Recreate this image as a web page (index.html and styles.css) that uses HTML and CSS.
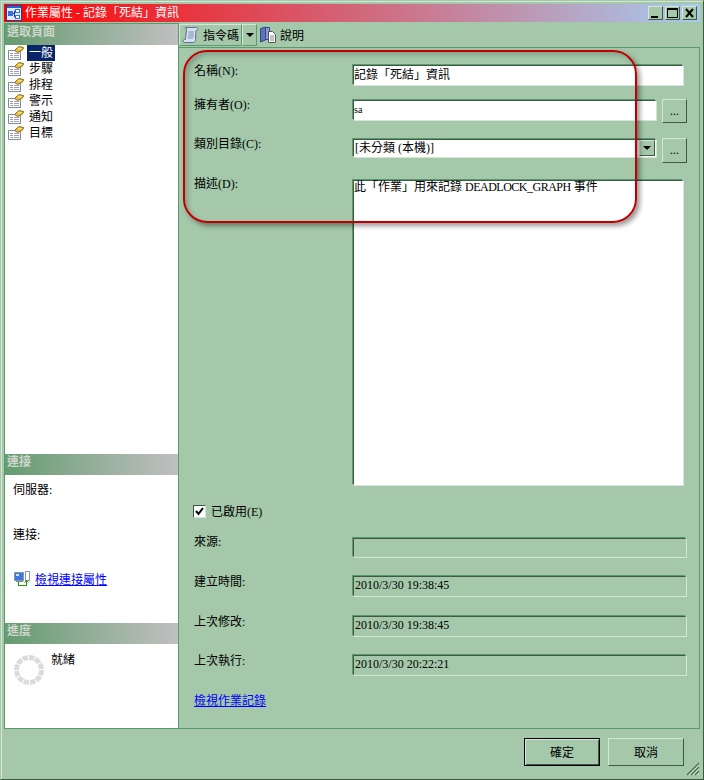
FILE: index.html
```html
<!DOCTYPE html>
<html lang="zh-Hant">
<head>
    <meta charset="UTF-8">
    <title>作業屬性</title>
    <link rel="stylesheet" href="styles.css">
</head>
<body>
    <svg class="defs" width="0" height="0">
        <symbol id="page-icon" viewBox="0 0 16 16">
            <path d="M.5 5.500h12v9H.5z" fill="#fff" stroke="#7f8a96"/>
            <path d="M2 8h3v1H2zM6 8h5v1H6zM2 10h3v1H2zM6 10h5v1H6zM2 12h3v1H2zM6 12h5v1H6z" fill="#9aa5b1"/>
            <path d="M6.500 5.500L11 1.500l4.500 1-.5 2-5 3z" fill="#f2c230" stroke="#5f5314" stroke-width=".8"/>
            <path d="M10 3.500l3.500.5" stroke="#fff2a8"/>
        </symbol>
    </svg>

    <div class="window">
        <header class="titlebar">
            <svg class="app-icon" width="16" height="16" viewBox="0 0 16 16">
                <rect x=".5" y=".5" width="15" height="15" fill="#dfe8f6" stroke="#23408f"/>
                <rect x="1" y="1" width="14" height="2" fill="#2f5fd0"/>
                <rect x="2" y="6" width="5" height="5" fill="#3a6fe0"/>
                <rect x="9.500" y="4.500" width="4" height="3" fill="#fff" stroke="#3a6fe0"/>
                <rect x="9.500" y="10.500" width="4" height="3" fill="#fff" stroke="#3a6fe0"/>
                <path d="M7 8.500h1.500M8.500 6v6M8.500 6h1M8.500 12h1" stroke="#23408f" fill="none"/>
            </svg>
            <span class="title-text">作業屬性 - 記錄「死結」資訊</span>
            <div class="window-buttons">
                <button class="win-btn"><svg width="13" height="12"><path d="M2 9h7v2H2z" fill="#000"/></svg></button>
                <button class="win-btn"><svg width="13" height="12"><path d="M1.500 2.500h10v8h-10z" fill="none" stroke="#000"/><path d="M1 1h11v2H1z" fill="#000"/></svg></button>
                <button class="win-btn win-close"><svg width="13" height="12"><path d="M3 2l7 8M10 2l-7 8" stroke="#000" stroke-width="2"/></svg></button>
            </div>
        </header>

        <div class="main">
            <aside class="sidebar">
                <div class="side-head">選取頁面</div>
                <ul class="page-list">
                    <li><svg width="16" height="16"><use href="#page-icon"/></svg><span class="selected">一般</span></li>
                    <li><svg width="16" height="16"><use href="#page-icon"/></svg><span>步驟</span></li>
                    <li><svg width="16" height="16"><use href="#page-icon"/></svg><span>排程</span></li>
                    <li><svg width="16" height="16"><use href="#page-icon"/></svg><span>警示</span></li>
                    <li><svg width="16" height="16"><use href="#page-icon"/></svg><span>通知</span></li>
                    <li><svg width="16" height="16"><use href="#page-icon"/></svg><span>目標</span></li>
                </ul>
                <div class="side-head">連接</div>
                <div class="conn-body">
                    <div class="conn-line">伺服器:</div>
                    <div class="conn-line">連接:</div>
                    <div class="conn-link">
                        <svg width="16" height="16" viewBox="0 0 16 16">
                            <rect x=".5" y="1.500" width="9" height="8" fill="#3b78e0" stroke="#8a97a8"/>
                            <rect x="2" y="3" width="3" height="2" fill="#cfe0ff"/>
                            <rect x="11.500" y=".5" width="4" height="9" fill="#fff" stroke="#8a97a8"/>
                            <rect x="2" y="10" width="7" height="1" fill="#7f8a96"/>
                            <path d="M4.500 11v3.500h8V10" fill="none" stroke="#2e9a10" stroke-width="1.200"/>
                            <path d="M10.500 11.500l2-2 2 2" fill="none" stroke="#2e9a10"/>
                        </svg>
                        <a href="#">檢視連接屬性</a>
                    </div>
                </div>
                <div class="side-head">進度</div>
                <div class="progress-body">
                    <svg width="30" height="30" viewBox="0 0 30 30">
                        <circle cx="15" cy="15" r="12.500" fill="none" stroke="#dcdcdc" stroke-width="5" stroke-dasharray="5.500 1"/>
                    </svg>
                    <span>就緒</span>
                </div>
            </aside>

            <section class="content">
                <div class="toolbar">
                    <button class="tool-btn script-btn">
                        <svg width="18" height="18" viewBox="0 0 18 18">
                            <path d="M3 1.500h11.500c1.800 0 2 3 0 3H14l-.5 9c0 2-1 3-2 3H2.500c-1.800 0-2-3 0-3h1L4.500 4C4.500 2.800 4 1.500 3 1.500z" fill="#d6dff2" stroke="#5f7290"/>
                            <path d="M6.500 6h5.500M6.500 8h5.500M6 10h6M6 12h5" stroke="#7f90aa"/>
                        </svg>
                        指令碼
                    </button>
                    <button class="tool-arrow"><span class="caret"></span></button>
                    <button class="tool-flat">
                        <svg width="18" height="18" viewBox="0 0 18 18">
                            <path d="M1.500 2.500l5-1.500v13l-5 2z" fill="#5f74b8" stroke="#34458a"/>
                            <path d="M6.500 1.500h4v12h-4z" fill="#8a9bd4" stroke="#34458a"/>
                            <path d="M9.500 5.500h4l3 3v8h-7z" fill="#fff" stroke="#555"/>
                            <path d="M11 10h4M11 12h4M11 14h4" stroke="#8a8a8a"/>
                        </svg>
                        說明
                    </button>
                </div>

                <form class="job-form">
                    <div class="row row-name">
                        <label class="row-label">名稱(N):</label>
                        <div class="field field-white field-name">記錄「死結」資訊</div>
                    </div>
                    <div class="row row-owner">
                        <label class="row-label">擁有者(O):</label>
                        <div class="field field-white field-short owner-value">sa</div>
                        <button type="button" class="dots">...</button>
                    </div>
                    <div class="row row-cat">
                        <label class="row-label">類別目錄(C):</label>
                        <div class="field field-white field-short field-combo">
                            <span>[未分類 (本機)]</span>
                            <span class="combo-arrow"><span class="caret"></span></span>
                        </div>
                        <button type="button" class="dots dots-tall">...</button>
                    </div>
                    <div class="row row-desc">
                        <label class="row-label">描述(D):</label>
                        <div class="field field-white field-desc"><span>此「作業」用來記錄 <span class="latin">DEADLOCK_GRAPH</span> 事件</span></div>
                    </div>
                    <div class="check-row">
                        <span class="check">
                            <svg width="11" height="11"><path d="M2 5l2.500 3L9 2" fill="none" stroke="#000" stroke-width="2"/></svg>
                        </span>
                        已啟用(E)
                    </div>
                    <div class="row row-source">
                        <label class="row-label">來源:</label>
                        <div class="field field-info field-source"></div>
                    </div>
                    <div class="row row-created">
                        <label class="row-label">建立時間:</label>
                        <div class="field field-info">2010/3/30 19:38:45</div>
                    </div>
                    <div class="row row-modified">
                        <label class="row-label">上次修改:</label>
                        <div class="field field-info">2010/3/30 19:38:45</div>
                    </div>
                    <div class="row row-run">
                        <label class="row-label">上次執行:</label>
                        <div class="field field-info">2010/3/30 20:22:21</div>
                    </div>
                    <a class="history-link" href="#">檢視作業記錄</a>
                </form>

                <div class="annotation"></div>
            </section>
        </div>

        <footer class="footer">
            <button class="dlg-btn dlg-default">確定</button>
            <button class="dlg-btn">取消</button>
            <svg class="grip" width="14" height="14" viewBox="0 0 14 14">
                <path d="M1 13L13 1M5 13l8-8M9 13l4-4" stroke="#4a6a50" stroke-width="1.200"/>
                <path d="M3 13L13 3M7 13l6-6M11 13l2-2" stroke="#d5e6d7"/>
            </svg>
        </footer>
    </div>
</body>
</html>
```

FILE: styles.css
```css
* {
    box-sizing: border-box;
}
body {
    margin: 0;
    font-family: "Liberation Serif", "Noto Sans CJK TC", serif;
    font-size: 12px;
    color: #000;
}
.defs {
    position: absolute;
}
button {
    font: inherit;
    color: inherit;
    padding: 0;
}
.window {
    width: 704px;
    height: 780px;
    display: flex;
    flex-direction: column;
    padding: 3px;
    background: #a4c8a9;
    border: 1px solid #a4c8a9;
    border-right-color: #3f5a44;
    border-bottom-color: #3f5a44;
    box-shadow: inset 1px 1px 0 #d5e6d7;
}

/* title bar */
.titlebar {
    height: 18px;
    display: flex;
    align-items: center;
    padding: 0 3px 0 2px;
    background: linear-gradient(to right, #ff0000, #a6caf0);
    color: #fff;
    flex: none;
}
.app-icon {
    margin-right: 3px;
}
.title-text {
    line-height: 18px;
}
.window-buttons {
    margin-left: auto;
    display: flex;
    gap: 2px;
}
.win-btn {
    width: 15px;
    height: 14px;
    display: flex;
    align-items: center;
    justify-content: center;
    background: #a4c8a9;
    border: 1px solid;
    border-color: #d5e6d7 #3f5a44 #3f5a44 #d5e6d7;
}

.main {
    flex: 1;
    display: flex;
    min-height: 0;
    margin-top: 1px;
}

/* left panel */
.sidebar {
    width: 175px;
    flex: none;
    display: flex;
    flex-direction: column;
    background: #fff;
    border: 1px solid #5b9a6b;
}
.side-head {
    height: 21px;
    flex: none;
    padding-left: 2px;
    line-height: 16px;
    font-weight: bold;
    color: #cfd6cc;
    background: linear-gradient(to right, #659c70, #c0c0c0);
}
.page-list {
    flex: 1;
    margin: 0;
    padding: 0 0 0 3px;
    list-style: none;
}
.page-list li {
    height: 16px;
    display: flex;
    align-items: center;
}
.page-list span {
    margin-left: 3px;
    padding: 0 2px;
    height: 16px;
    line-height: 17px;
}
.page-list .selected {
    background: #0a246a;
    color: #fff;
}
.conn-body {
    height: 148px;
    flex: none;
    padding: 7px 0 0 8px;
}
.conn-line {
    height: 45px;
    line-height: 16px;
}
.conn-link {
    display: flex;
    align-items: center;
    gap: 5px;
    margin-top: -2px;
    margin-left: 1px;
}
a {
    color: #0000ff;
}
.progress-body {
    height: 84px;
    flex: none;
    display: flex;
    align-items: flex-start;
    padding: 10px 0 0 9px;
}
.progress-body svg {
    margin-top: 1px;
}
.progress-body span {
    margin: -2px 0 0 7px;
    line-height: 16px;
}

/* right panel */
.content {
    position: relative;
    flex: 1;
    display: flex;
    flex-direction: column;
}
.toolbar {
    height: 24px;
    flex: none;
    display: flex;
    align-items: center;
}
.tool-btn,
.tool-arrow {
    height: 22px;
    display: flex;
    align-items: center;
    background: #a4c8a9;
    border: 1px solid;
    border-color: #d5e6d7 #5b9a6b #5b9a6b #d5e6d7;
}
.tool-btn {
    width: 63px;
    padding-left: 2px;
    gap: 3px;
}
.tool-arrow {
    width: 15px;
    justify-content: center;
}
.tool-flat {
    display: flex;
    align-items: center;
    gap: 3px;
    margin-left: 2px;
    background: none;
    border: none;
}
.caret {
    width: 0;
    height: 0;
    border-left: 4px solid transparent;
    border-right: 4px solid transparent;
    border-top: 4px solid #000;
}
.job-form {
    flex: 1;
    display: flex;
    flex-direction: column;
    padding: 16px 0 0 15px;
    border: 1px solid #5b9a6b;
    border-left: none;
}
.row {
    display: flex;
    align-items: flex-start;
    flex: none;
}
.row-label {
    width: 159px;
    flex: none;
    margin-top: -1px;
    line-height: 14px;
}
.field {
    display: flex;
    align-items: center;
    padding-left: 0;
    line-height: 14px;
    border: 1px solid;
    box-shadow: -1px -1px 0 #5b9a6b, 1px 1px 0 #d5e6d7;
}
.field-white {
    background: #fff;
    border-color: #3f5a44 #fff #fff #3f5a44;
}
.field-name {
    width: 330px;
    height: 20px;
    padding-bottom: 1px;
}
.field-short {
    width: 303px;
    height: 20px;
    margin-top: 1px;
}
.owner-value {
    font-size: 10px;
}
.field-desc {
    width: 330px;
    height: 305px;
    align-items: flex-start;
    line-height: 13px;
}
.latin {
    letter-spacing: -0.5px;
}
.field-info {
    width: 333px;
    height: 20px;
    padding-left: 1px;
    padding-bottom: 2px;
    border-color: #3f5a44 #a4c8a9 #a4c8a9 #3f5a44;
}
.field-source {
    height: 19px;
}
.dots {
    width: 25px;
    height: 24px;
    margin-left: 6px;
    background: #a4c8a9;
    border: 1px solid;
    border-color: #d5e6d7 #3f5a44 #3f5a44 #d5e6d7;
}
.dots-tall {
    height: 25px;
}
.row-name {
    margin-top: 1px;
}
.row-owner {
    margin-top: 14px;
}
.row-cat {
    margin-top: 15px;
}
.row-desc {
    margin-top: 17px;
}
.row-desc .row-label {
    margin-top: -3px;
}
.field-combo {
    height: 18px;
    justify-content: space-between;
    padding-left: 1px;
    padding-right: 0;
}
.combo-arrow {
    width: 16px;
    height: 16px;
    display: flex;
    align-items: center;
    justify-content: center;
    background: #a4c8a9;
    border: 1px solid;
    border-color: #d5e6d7 #3f5a44 #3f5a44 #d5e6d7;
}
.check-row {
    display: flex;
    align-items: center;
    gap: 5px;
    margin-top: 19px;
    height: 14px;
    margin-left: -1px;
}
.check {
    width: 13px;
    height: 13px;
    display: flex;
    align-items: center;
    justify-content: center;
    background: #fff;
    border: 1px solid;
    border-color: #3f5a44 #d5e6d7 #d5e6d7 #3f5a44;
}
.row-source {
    margin-top: 20px;
}
.row-source .row-label {
    margin-top: -3px;
}
.row-created,
.row-run {
    margin-top: 19px;
}
.row-modified {
    margin-top: 20px;
}
.history-link {
    margin-top: 19px;
    line-height: 14px;
    align-self: flex-start;
}

/* red marker drawn over the screenshot */
.annotation {
    position: absolute;
    left: 4px;
    top: 27px;
    width: 454px;
    height: 173px;
    border: 2px solid #c00000;
    border-radius: 24px;
    box-shadow: 3px 3px 5px rgba(0, 0, 0, 0.4), inset 3px 3px 5px rgba(0, 0, 0, 0.2);
    pointer-events: none;
}

/* bottom buttons */
.footer {
    position: relative;
    height: 47px;
    flex: none;
    display: flex;
    justify-content: flex-end;
    gap: 8px;
    padding: 9px 16px 0 0;
}
.dlg-btn {
    width: 76px;
    height: 28px;
    background: #a4c8a9;
    border: 1px solid;
    border-color: #d5e6d7 #3f5a44 #3f5a44 #d5e6d7;
}
.dlg-default {
    border: 1px solid #000;
    box-shadow: inset 1px 1px 0 #d5e6d7, inset -1px -1px 0 #3f5a44;
}
.grip {
    position: absolute;
    right: 0;
    bottom: 0;
}
```
